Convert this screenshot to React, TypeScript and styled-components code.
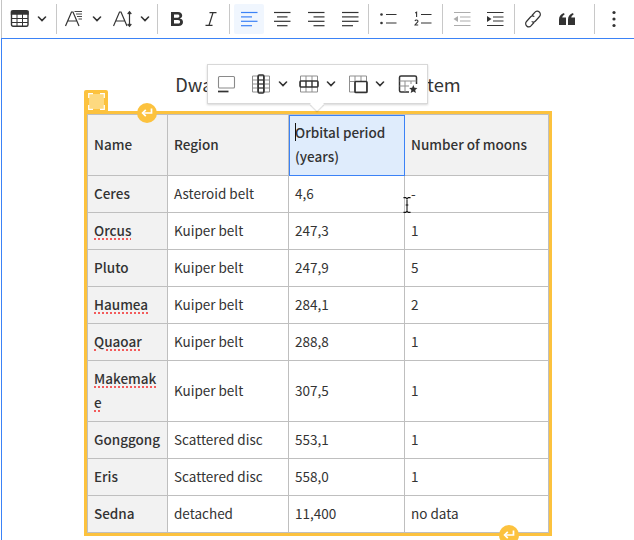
import React from 'react';
import styled, { createGlobalStyle } from 'styled-components';

const ink = '#333333';
const yellow = '#fcc23e';

const GlobalStyle = createGlobalStyle`
    html, body {
        margin: 0;
        background: #fff;
        overflow: hidden;
    }
    body {
        width: 634px;
        height: 540px;
        font-family: "Noto Sans CJK JP", "Noto Sans", sans-serif;
        color: ${ink};
    }
`;

const Page = styled.div`
    width: 634px;
    height: 540px;
    overflow: hidden;
    position: relative;
`;

const Toolbar = styled.div`
    height: 38px;
    box-sizing: border-box;
    border-left: 1px solid #c4c4c4;
    margin-left: 1px;
    padding-left: 2px;
    display: flex;
    align-items: center;
    gap: 3.6px;
`;

const ToolButton = styled.div<{ $width?: number; $active?: boolean; $gap?: number }>`
    width: ${(p) => p.$width ?? 30}px;
    height: 30px;
    flex-shrink: 0;
    display: flex;
    align-items: center;
    justify-content: center;
    gap: ${(p) => p.$gap ?? 0}px;
    border-radius: 2px;
    background: ${(p) => (p.$active ? '#f0f6fe' : 'transparent')};
    color: ${(p) => (p.$active ? '#3b82f6' : ink)};
`;

const Separator = styled.div<{ $offset?: number }>`
    width: 1px;
    height: 30px;
    flex-shrink: 0;
    background: #c8c8c8;
    margin-left: ${(p) => p.$offset ?? 0}px;
`;

const Editor = styled.div`
    height: 502px;
    box-sizing: border-box;
    margin-left: 1px;
    border-top: 1px solid #3b82f6;
    border-left: 1px solid #3b82f6;
    padding: 32px 0 0 82px;
`;

const Figure = styled.div`
    width: 468px;
`;

const Caption = styled.div`
    font-size: 18.25px;
    line-height: 26px;
    text-align: center;
    margin-bottom: 14px;
    color: #333;
`;

const TableFrame = styled.div`
    position: relative;
    width: 468px;
    box-sizing: border-box;
    border: 3px solid ${yellow};
`;

const Grid = styled.table`
    width: 461px;
    table-layout: fixed;
    border-collapse: collapse;
    font-size: 13.5px;
    line-height: 24px;
    color: #333;
`;

const HeadCell = styled.th`
    border: 1px solid #bfbfbf;
    background: #f2f2f2;
    padding: 5px 6px 7px;
    text-align: left;
    font-weight: 500;
    overflow-wrap: anywhere;
`;

const SelectedCell = styled(HeadCell)`
    position: relative;
    background: #dfecfc;
    outline: 1px solid #3b82f6;
    outline-offset: -1px;
`;

const Cell = styled.td`
    border: 1px solid #bfbfbf;
    padding: 5px 6px 7px;
    overflow-wrap: anywhere;
`;

const Misspelled = styled.span`
    text-decoration: underline dotted #f35b5b 2px;
    text-underline-offset: 2px;
`;

const Caret = styled.span`
    position: absolute;
    left: 6px;
    top: 8px;
    width: 1px;
    height: 18px;
    background: #111;
`;

const CornerHandle = styled.div`
    position: absolute;
    left: -3px;
    top: -24px;
    width: 24px;
    height: 22px;
    background: ${yellow};
    border-radius: 2px 2px 0 0;
    display: flex;
    align-items: center;
    justify-content: center;
`;

const EnterWidget = styled.div<{ $left: number; $top: number }>`
    position: absolute;
    left: ${(p) => p.$left}px;
    top: ${(p) => p.$top}px;
    width: 20px;
    height: 20px;
    border-radius: 50%;
    background: ${yellow};
    display: flex;
    align-items: center;
    justify-content: center;
`;

const Balloon = styled.div`
    position: absolute;
    left: 207px;
    top: 64px;
    width: 221px;
    height: 40px;
    box-sizing: border-box;
    background: #fff;
    border: 1px solid #d8d8d8;
    box-shadow: 0 1px 2px rgba(0, 0, 0, 0.16);
    display: flex;
    align-items: center;
    padding-left: 9px;
    &::after {
        content: '';
        position: absolute;
        left: 104px;
        bottom: -6px;
        width: 10px;
        height: 10px;
        background: #fff;
        transform: rotate(45deg);
        box-shadow: 1px 1px 1px rgba(0, 0, 0, 0.14);
    }
`;

const BalloonButton = styled.div<{ $width: number }>`
    width: ${(p) => p.$width}px;
    height: 30px;
    flex-shrink: 0;
    display: flex;
    align-items: center;
    gap: 7px;
    color: ${ink};
`;

const MouseCursor = styled.svg`
    position: absolute;
    left: 403px;
    top: 197px;
`;

const Chevron = () => (
    <svg width="10" height="6" viewBox="0 0 10 6" fill="none" stroke={ink} strokeWidth="1.6" strokeLinecap="round">
        <path d="M1.5 1 L5 4.5 L8.5 1" />
    </svg>
);

const Icon: React.FC<{ size?: number; children: React.ReactNode }> = ({ size = 20, children }) => (
    <svg width={size} height={size} viewBox="0 0 20 20" fill="none" stroke="currentColor" strokeWidth="1.4">
        {children}
    </svg>
);

const TableIcon = () => (
    <Icon>
        <rect x="1.5" y="1.7" width="16.5" height="15.6" rx="1.5" fill="none" />
        <path d="M1.5 2.5 h16.5 v2.5 h-16.5 z" fill="currentColor" />
        <path d="M7 5 v12 M12.5 5 v12 M1.5 9.5 h16.5 M1.5 13.5 h16.5" strokeWidth="1" />
    </Icon>
);

const FontStyleIcon = () => (
    <Icon>
        <path d="M1.5 17 L7.5 3 L9 3 L15 17 M4 12 H12.5" strokeWidth="1.2" />
        <path d="M10.5 2.5 H18 M12 5 H18 M13 7.5 H18 M14.5 10 H18" strokeWidth="0.9" />
    </Icon>
);

const LineHeightIcon = () => (
    <Icon>
        <path d="M0.5 17 L6.5 3 L8 3 L14 17 M3 12 H11.5" strokeWidth="1.2" />
        <path d="M16.5 3 V17 M14.7 5 L16.5 2.8 L18.3 5 M14.7 15 L16.5 17.2 L18.3 15" strokeWidth="1.2" />
    </Icon>
);

const BoldIcon = () => (
    <Icon>
        <path
            d="M4 3 H11 C13.6 3 15.2 4.5 15.2 6.6 C15.2 8.1 14.2 9.2 12.8 9.5 C14.7 9.8 16 11 16 13 C16 15.4 14.2 17 11.5 17 H4 Z M7 5.4 V8.7 H10.6 C11.8 8.7 12.4 8 12.4 7 C12.4 6 11.8 5.4 10.6 5.4 Z M7 10.9 V14.6 H11 C12.3 14.6 13.1 13.9 13.1 12.7 C13.1 11.6 12.3 10.9 11 10.9 Z"
            fill="currentColor"
            stroke="none"
            fillRule="evenodd"
        />
    </Icon>
);

const ItalicIcon = () => (
    <Icon>
        <path d="M8.5 3.7 H15.5 M4.5 16.3 H11.5 M12 3.7 L8 16.3" strokeWidth="1.2" />
    </Icon>
);

const AlignIcon: React.FC<{ rows: [number, number][] }> = ({ rows }) => (
    <Icon>
        {rows.map(([x, w], i) => (
            <path key={i} d={`M${x} ${3.5 + i * 4.4} h${w}`} strokeWidth="1.2" />
        ))}
    </Icon>
);

const BulletIcon = () => (
    <Icon>
        <circle cx="3.5" cy="5.5" r="1.3" fill="currentColor" stroke="none" />
        <circle cx="3.5" cy="14" r="1.3" fill="currentColor" stroke="none" />
        <path d="M8 5.5 H18.5 M8 14 H18.5" strokeWidth="1.2" />
    </Icon>
);

const NumberedIcon = () => (
    <Icon>
        <path d="M2.2 4 L3.6 3.2 V8" strokeWidth="1.1" />
        <path d="M2 12 C2.4 10.6 5 10.7 5 12.2 C5 13.5 2.6 14.5 2 16 H5.2" strokeWidth="1.1" />
        <path d="M8 5.5 H18.5 M8 14 H18.5" strokeWidth="1.2" />
    </Icon>
);

const IndentIcon: React.FC<{ out?: boolean }> = ({ out }) => (
    <Icon>
        <g opacity={out ? 0.4 : 1}>
            <path d="M2 3.5 H18.5 M8 8 H18.5 M8 12 H18.5 M2 16.5 H18.5" strokeWidth="1.2" />
            <path d={out ? 'M6 7 V13 L1.5 10 Z' : 'M2 7 V13 L6.5 10 Z'} fill="currentColor" stroke="none" />
        </g>
    </Icon>
);

const LinkIcon = () => (
    <Icon>
        <path
            d="M9 6.5 L11.8 3.3 C13 2 15 1.8 16.3 3 C17.6 4.2 17.7 6.2 16.5 7.5 L12.5 12 C11.4 13.2 9.7 13.3 8.7 12.4 M11 13.5 L8.2 16.7 C7 18 5 18.2 3.7 17 C2.4 15.8 2.3 13.8 3.5 12.5 L7.5 8 C8.6 6.8 10.3 6.7 11.3 7.6"
            strokeWidth="1.2"
        />
    </Icon>
);

const QuoteIcon = () => (
    <Icon>
        <path
            d="M2 16 V10.5 C2 7.5 3.8 5 7 4 L7.6 5.5 C6 6.3 5.4 7.4 5.3 8.6 H9 V16 Z M11 16 V10.5 C11 7.5 12.8 5 16 4 L16.6 5.5 C15 6.3 14.4 7.4 14.3 8.6 H18 V16 Z"
            fill="currentColor"
            stroke="none"
        />
    </Icon>
);

const DotsIcon = () => (
    <Icon>
        <circle cx="10" cy="3.5" r="1.6" fill="currentColor" stroke="none" />
        <circle cx="10" cy="10" r="1.6" fill="currentColor" stroke="none" />
        <circle cx="10" cy="16.5" r="1.6" fill="currentColor" stroke="none" />
    </Icon>
);

const CaptionToggleIcon = () => (
    <Icon>
        <rect x="1.5" y="2.5" width="16" height="11.5" rx="1" stroke="#8a8a8a" strokeWidth="1.1" />
        <path d="M1 17.5 H11.5" strokeWidth="1.7" />
    </Icon>
);

const faint = '#8f8f8f';

const ColumnIcon = () => (
    <Icon>
        <path d="M1.5 2 H18.5 V18 H1.5 Z M1.5 6 H18.5 M1.5 10 H18.5 M1.5 14 H18.5 M6.5 2 V18 M13.5 2 V18" stroke={faint} strokeWidth="1" />
        <rect x="7.2" y="1" width="5.6" height="18" rx="1" strokeWidth="1.6" />
        <path d="M7.2 6 H12.8 M7.2 10 H12.8 M7.2 14 H12.8" strokeWidth="1.2" />
    </Icon>
);

const RowIcon = () => (
    <Icon>
        <path d="M1.5 2 H18.5 V18 H1.5 Z M7 2 V18 M13 2 V18" stroke={faint} strokeWidth="1" />
        <rect x="1" y="7" width="18" height="6" rx="1" strokeWidth="1.6" />
        <path d="M7 7 V13 M13 7 V13" strokeWidth="1.2" />
    </Icon>
);

const MergeIcon = () => (
    <Icon>
        <path d="M1.5 2 H18.5 V18 H1.5 Z M1.5 7.5 H18.5 M7 2 V18 M13 2 V8" stroke={faint} strokeWidth="1" />
        <rect x="7" y="7.5" width="12" height="11" rx="1" strokeWidth="1.7" />
    </Icon>
);

const TablePropsIcon = () => (
    <Icon>
        <path d="M11 18 H3 A1.5 1.5 0 0 1 1.5 16.5 V3.5 A1.5 1.5 0 0 1 3 2 H17 A1.5 1.5 0 0 1 18.5 3.5 V10" strokeWidth="1.5" />
        <path d="M1.5 7 H18.5 M1.5 12 H11 M7 7 V18 M13 7 V10" stroke={faint} strokeWidth="1" />
        <path
            d="M15.3 11 L16.5 13.8 L19.4 14 L17.2 16 L17.9 18.9 L15.3 17.4 L12.7 18.9 L13.4 16 L11.2 14 L14.1 13.8 Z"
            fill="currentColor"
            stroke="none"
        />
    </Icon>
);

const EnterIcon = () => (
    <svg width="12" height="10" viewBox="0 0 12 10" fill="none" stroke="#fff" strokeWidth="1.7">
        <path d="M10.5 0.5 V5 H2.5" />
        <path d="M4.8 1.8 L1.6 5 L4.8 8.2" fill="none" />
    </svg>
);

const SelectHandleIcon = () => (
    <svg width="17" height="17" viewBox="0 0 17 17" fill="none">
        <rect x="1" y="1" width="15" height="15" fill="#fdd97f" />
        <path d="M0.7 5 V0.7 H5 M12 0.7 H16.3 V5 M16.3 12 V16.3 H12 M5 16.3 H0.7 V12" stroke="#fff" strokeWidth="1.2" />
    </svg>
);

const rows: { name: string; region: string; period: string; moons: string; flagged?: boolean }[] = [
    { name: 'Ceres', region: 'Asteroid belt', period: '4,6', moons: '-' },
    { name: 'Orcus', region: 'Kuiper belt', period: '247,3', moons: '1', flagged: true },
    { name: 'Pluto', region: 'Kuiper belt', period: '247,9', moons: '5' },
    { name: 'Haumea', region: 'Kuiper belt', period: '284,1', moons: '2', flagged: true },
    { name: 'Quaoar', region: 'Kuiper belt', period: '288,8', moons: '1', flagged: true },
    { name: 'Makemake', region: 'Kuiper belt', period: '307,5', moons: '1', flagged: true },
    { name: 'Gonggong', region: 'Scattered disc', period: '553,1', moons: '1' },
    { name: 'Eris', region: 'Scattered disc', period: '558,0', moons: '1' },
    { name: 'Sedna', region: 'detached', period: '11,400', moons: 'no data' },
];

export default function App() {
    return (
        <Page>
            <GlobalStyle />
            <Toolbar>
                <ToolButton $width={48} $gap={7}>
                    <TableIcon />
                    <Chevron />
                </ToolButton>
                <Separator />
                <ToolButton $width={45} $gap={8}>
                    <FontStyleIcon />
                    <Chevron />
                </ToolButton>
                <ToolButton $width={45} $gap={7}>
                    <LineHeightIcon />
                    <Chevron />
                </ToolButton>
                <Separator />
                <ToolButton>
                    <BoldIcon />
                </ToolButton>
                <ToolButton>
                    <ItalicIcon />
                </ToolButton>
                <Separator />
                <ToolButton $active>
                    <AlignIcon rows={[[2, 16.5], [2, 11], [2, 16.5], [2, 11]]} />
                </ToolButton>
                <ToolButton>
                    <AlignIcon rows={[[2, 16.5], [5, 10.5], [2, 16.5], [5, 10.5]]} />
                </ToolButton>
                <ToolButton>
                    <AlignIcon rows={[[2, 16.5], [7.5, 11], [2, 16.5], [7.5, 11]]} />
                </ToolButton>
                <ToolButton>
                    <AlignIcon rows={[[2, 16.5], [2, 16.5], [2, 16.5], [2, 11]]} />
                </ToolButton>
                <Separator />
                <ToolButton $width={31}>
                    <BulletIcon />
                </ToolButton>
                <ToolButton $width={31}>
                    <NumberedIcon />
                </ToolButton>
                <Separator />
                <ToolButton>
                    <IndentIcon out />
                </ToolButton>
                <ToolButton>
                    <IndentIcon />
                </ToolButton>
                <Separator />
                <ToolButton>
                    <LinkIcon />
                </ToolButton>
                <ToolButton>
                    <QuoteIcon />
                </ToolButton>
                <Separator $offset={9} />
                <ToolButton>
                    <DotsIcon />
                </ToolButton>
            </Toolbar>
            <Editor>
                <Figure>
                    <Caption>Dwarf planets of the Solar System</Caption>
                    <TableFrame>
                        <CornerHandle>
                            <SelectHandleIcon />
                        </CornerHandle>
                        <EnterWidget $left={50} $top={-11}>
                            <EnterIcon />
                        </EnterWidget>
                        <Grid>
                            <colgroup>
                                <col style={{ width: 80 }} />
                                <col style={{ width: 121 }} />
                                <col style={{ width: 116 }} />
                                <col style={{ width: 144 }} />
                            </colgroup>
                            <thead>
                                <tr>
                                    <HeadCell>Name</HeadCell>
                                    <HeadCell>Region</HeadCell>
                                    <SelectedCell>
                                        <Caret />
                                        Orbital period (years)
                                    </SelectedCell>
                                    <HeadCell>Number of moons</HeadCell>
                                </tr>
                            </thead>
                            <tbody>
                                {rows.map((row) => (
                                    <tr key={row.name}>
                                        <HeadCell>{row.flagged ? <Misspelled>{row.name}</Misspelled> : row.name}</HeadCell>
                                        <Cell>{row.region}</Cell>
                                        <Cell>{row.period}</Cell>
                                        <Cell>{row.moons}</Cell>
                                    </tr>
                                ))}
                            </tbody>
                        </Grid>
                        <EnterWidget $left={412} $top={411}>
                            <EnterIcon />
                        </EnterWidget>
                    </TableFrame>
                </Figure>
            </Editor>
            <Balloon>
                <BalloonButton $width={34}>
                    <CaptionToggleIcon />
                </BalloonButton>
                <BalloonButton $width={48}>
                    <ColumnIcon />
                    <Chevron />
                </BalloonButton>
                <BalloonButton $width={49}>
                    <RowIcon />
                    <Chevron />
                </BalloonButton>
                <BalloonButton $width={50}>
                    <MergeIcon />
                    <Chevron />
                </BalloonButton>
                <BalloonButton $width={24}>
                    <TablePropsIcon />
                </BalloonButton>
            </Balloon>
            <MouseCursor width="8" height="16" viewBox="0 0 9 18" fill="none" stroke="#111" strokeWidth="1.2">
                <path d="M0.5 0.7 H3 L4.5 2 L6 0.7 H8.5 M4.5 2 V16 M0.5 17.3 H3 L4.5 16 L6 17.3 H8.5 M3 9 H6" />
            </MouseCursor>
        </Page>
    );
}
